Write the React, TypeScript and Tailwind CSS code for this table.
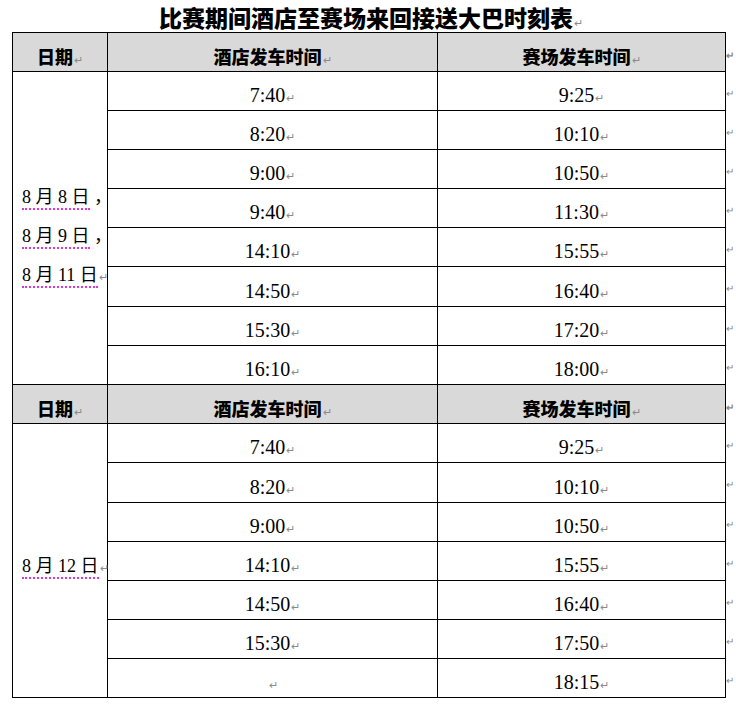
import React from "react";

const Mark = () => <span className="ml-[1px] text-[11px] font-normal text-[#8a8a8a]">↵</span>;
const EdgeMark = () => <span className="text-[10px] text-[#8a8a8a]">↵</span>;

const block1 = [
  ["7:40", "9:25"],
  ["8:20", "10:10"],
  ["9:00", "10:50"],
  ["9:40", "11:30"],
  ["14:10", "15:55"],
  ["14:50", "16:40"],
  ["15:30", "17:20"],
  ["16:10", "18:00"],
];
const block2 = [
  ["7:40", "9:25"],
  ["8:20", "10:10"],
  ["9:00", "10:50"],
  ["14:10", "15:55"],
  ["14:50", "16:40"],
  ["15:30", "17:50"],
  ["", "18:15"],
];

const h1 = [39, 39, 39, 39, 39, 40, 39, 39];
const h2 = [39, 40, 39, 39, 39, 39, 39];

const cell = "border border-black align-bottom text-center";
const serif = { fontFamily: '"Liberation Serif", "Noto Sans CJK SC", serif' };

const Dotted = ({ children }: { children: React.ReactNode }) => (
  <span className="border-b-2 border-dotted border-[#d63ad6] pb-[1px]">{children}</span>
);

function Header() {
  return (
    <tr className="h-[39px] bg-[#d9d9d9] font-black text-[18px] leading-[24px]">
      <td className={cell + " pb-0"}>日期<Mark /></td>
      <td className={cell + " pb-0"}>酒店发车时间<Mark /></td>
      <td className={cell + " pb-0"}>赛场发车时间<Mark /></td>
      <td className="align-top pl-0 pt-[6px] bg-white whitespace-nowrap"><EdgeMark /></td>
    </tr>
  );
}

function Row({ a, b, h }: { a: string; b: string; h: number }) {
  return (
    <>
      <td className={cell + " text-[20px] leading-[24px] pb-0"} style={serif}>
        {a}
        <Mark />
      </td>
      <td className={cell + " text-[20px] leading-[24px] pb-0"} style={serif}>
        {b}
        <Mark />
      </td>
      <td className="align-top pl-0 pt-[6px] whitespace-nowrap" style={{ height: h }}>
        <EdgeMark />
      </td>
    </>
  );
}

export default function App() {
  return (
    <div
      className="w-[736px] h-[707px] bg-white text-black overflow-hidden"
      style={{ fontFamily: '"Noto Sans CJK SC", "Liberation Sans", sans-serif' }}
    >
      <h1 className="h-[32px] pl-[159px] text-[23px] font-black leading-[34px] tracking-[0px] whitespace-nowrap">
        比赛期间酒店至赛场来回接送大巴时刻表<Mark />
      </h1>
      <table className="ml-[12px] w-[724px] border-collapse table-fixed">
        <colgroup>
          <col className="w-[95px]" />
          <col className="w-[330px]" />
          <col className="w-[288px]" />
          <col className="w-[11px]" />
        </colgroup>
        <tbody>
          <Header />
          {block1.map(([a, b], i) => (
            <tr key={"a" + i}>
              {i === 0 && (
                <td
                  rowSpan={8}
                  className="border border-black align-middle pl-[9px] pt-[18px] text-[18px] leading-[39px] whitespace-nowrap"
                  style={serif}
                >
                  <div><Dotted>8 月 8 日</Dotted> ，</div>
                  <div><Dotted>8 月 9 日</Dotted> ，</div>
                  <div><Dotted>8 月 11 日</Dotted><Mark /></div>
                </td>
              )}
              <Row a={a} b={b} h={h1[i]} />
            </tr>
          ))}
          <Header />
          {block2.map(([a, b], i) => (
            <tr key={"b" + i}>
              {i === 0 && (
                <td
                  rowSpan={7}
                  className="border border-black align-middle pl-[9px] pt-[12px] text-[18px] whitespace-nowrap"
                  style={serif}
                >
                  <Dotted>8 月 12 日</Dotted><Mark />
                </td>
              )}
              <Row a={a} b={b} h={h2[i]} />
            </tr>
          ))}
        </tbody>
      </table>
    </div>
  );
}
